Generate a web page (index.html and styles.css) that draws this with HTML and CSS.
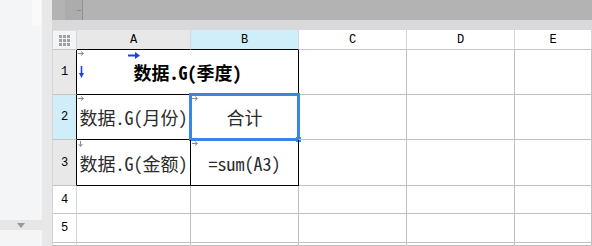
FILE: index.html
```html
<!DOCTYPE html>
<html lang="zh-CN">
<head>
    <meta charset="UTF-8">
    <title>报表设计</title>
    <link rel="stylesheet" href="styles.css">
</head>
<body>
    <!-- left side panel -->
    <div class="side-panel">
        <div class="side-top">
            <div class="side-thumb"></div>
        </div>
        <div class="side-bar">
            <svg width="8" height="5" viewBox="0 0 8 5"><path d="M0 0H8L4 5Z" fill="#9a9a9a"/></svg>
        </div>
        <div class="side-bottom"></div>
    </div>
    <div class="side-gutter"></div>

    <div class="sheet-area">
        <div class="toolbar">
            <div class="toolbar-tab"><span class="tick"></span></div>
        </div>
        <div class="toolbar-sub"></div>

        <!-- spreadsheet grid -->
        <div class="grid">
            <div class="hd corner">
                <svg width="11" height="11" viewBox="0 0 11 11" fill="#a0a0a0">
                    <rect x="0" y="0" width="3" height="3"/><rect x="4" y="0" width="3" height="3"/><rect x="8" y="0" width="3" height="3"/>
                    <rect x="0" y="4" width="3" height="3"/><rect x="4" y="4" width="3" height="3"/><rect x="8" y="4" width="3" height="3"/>
                    <rect x="0" y="8" width="3" height="3"/><rect x="4" y="8" width="3" height="3"/><rect x="8" y="8" width="3" height="3"/>
                </svg>
            </div>
            <div class="hd col used bb-dark">A</div>
            <div class="hd col active bb-dark">B</div>
            <div class="hd col">C</div>
            <div class="hd col">D</div>
            <div class="hd col">E</div>

            <!-- row 1 -->
            <div class="hd row used br-dark">1</div>
            <div class="cell merged title br-dark bb-dark">
                <svg class="mark mark-tl" width="6" height="5" viewBox="0 0 6 5"><path d="M0 2.5H5M3 0.5L5.5 2.5L3 4.5" stroke="#8a8a8a" fill="none"/></svg>
                <svg class="mark mark-right" width="12" height="7" viewBox="0 0 12 7"><path d="M0 3.5H8" stroke="#1f3fe0" stroke-width="2"/><path d="M7 0L12 3.5L7 7Z" fill="#1f3fe0"/></svg>
                <svg class="mark mark-down" width="5" height="12" viewBox="0 0 5 12"><path d="M2.5 0V8" stroke="#1f3fe0" stroke-width="1.6"/><path d="M0 7L2.5 12L5 7Z" fill="#1f3fe0"/></svg>
                数据.G(季度)
            </div>
            <div class="cell"></div>
            <div class="cell"></div>
            <div class="cell"></div>

            <!-- row 2 -->
            <div class="hd row active br-dark">2</div>
            <div class="cell br-dark bb-dark">
                <svg class="mark mark-tl" width="6" height="5" viewBox="0 0 6 5"><path d="M0 2.5H5M3 0.5L5.5 2.5L3 4.5" stroke="#8a8a8a" fill="none"/></svg>
                数据.G(月份)
            </div>
            <div class="cell br-dark bb-dark selected">
                <svg class="mark mark-tl" width="6" height="5" viewBox="0 0 6 5"><path d="M0 2.5H5M3 0.5L5.5 2.5L3 4.5" stroke="#8a8a8a" fill="none"/></svg>
                合计
                <span class="selection"><span class="handle"></span></span>
            </div>
            <div class="cell"></div>
            <div class="cell"></div>
            <div class="cell"></div>

            <!-- row 3 -->
            <div class="hd row used br-dark">3</div>
            <div class="cell br-dark bb-dark">
                <svg class="mark mark-tl" width="5" height="6" viewBox="0 0 5 6"><path d="M2.5 0V5M0.5 3L2.5 5.5L4.5 3" stroke="#8a8a8a" fill="none"/></svg>
                数据.G(金额)
            </div>
            <div class="cell br-dark bb-dark">
                <svg class="mark mark-tl" width="6" height="5" viewBox="0 0 6 5"><path d="M0 2.5H5M3 0.5L5.5 2.5L3 4.5" stroke="#8a8a8a" fill="none"/></svg>
                =sum(A3)
            </div>
            <div class="cell"></div>
            <div class="cell"></div>
            <div class="cell"></div>

            <!-- row 4 -->
            <div class="hd row">4</div>
            <div class="cell"></div>
            <div class="cell"></div>
            <div class="cell"></div>
            <div class="cell"></div>
            <div class="cell"></div>

            <!-- row 5 -->
            <div class="hd row">5</div>
            <div class="cell"></div>
            <div class="cell"></div>
            <div class="cell"></div>
            <div class="cell"></div>
            <div class="cell"></div>

            <!-- row 6 (cut off) -->
            <div class="hd row"></div>
            <div class="cell"></div>
            <div class="cell"></div>
            <div class="cell"></div>
            <div class="cell"></div>
            <div class="cell"></div>
        </div>
    </div>
</body>
</html>
```

FILE: styles.css
```css
* {
    margin: 0;
    padding: 0;
    box-sizing: border-box;
}

html, body {
    width: 592px;
    height: 246px;
    overflow: hidden;
}

body {
    display: flex;
    background-color: #fff;
    font-family: "Liberation Mono", "Noto Sans CJK SC", monospace;
}

/* Left panel */
.side-panel {
    width: 42px;
    height: 246px;
    flex-shrink: 0;
    display: flex;
    flex-direction: column;
    background-color: #f4f5f7;
}

.side-top {
    height: 220px;
    flex-shrink: 0;
    display: flex;
    justify-content: flex-end;
    padding-right: 1px;
}

.side-thumb {
    width: 9px;
    height: 26px;
    background-color: #fafafb;
    border-radius: 0 0 4px 4px;
}

.side-bar {
    height: 10px;
    flex-shrink: 0;
    background-color: #e6e6e6;
    display: flex;
    align-items: center;
    justify-content: center;
}

.side-bottom {
    flex: 1;
}

.side-gutter {
    width: 10px;
    height: 246px;
    flex-shrink: 0;
    background-color: #e8e8e8;
}

/* Sheet */
.sheet-area {
    flex: 1;
    display: flex;
    flex-direction: column;
}

.toolbar {
    height: 20px;
    flex-shrink: 0;
    background-color: #b3b3b3;
    padding-left: 13px;
    display: flex;
}

.toolbar-tab {
    width: 18px;
    height: 20px;
    background-color: #acacac;
    border-right: 1px solid #8f8f8f;
    display: flex;
    align-items: center;
    justify-content: flex-end;
    padding-right: 1px;
}

.tick {
    width: 4px;
    height: 1px;
    background-color: #8a8a8a;
}

.toolbar-sub {
    height: 10px;
    flex-shrink: 0;
    background-color: #d9d9db;
}

.grid {
    flex-shrink: 0;
    display: grid;
    grid-template-columns: 24px 114px 108px 108px 108px 77px;
    grid-template-rows: 20px 45px 45px 46px 28px 29px 3px;
    border-left: 1px solid #d4d4d4;
}

.hd {
    display: flex;
    align-items: center;
    justify-content: center;
    font-family: "Liberation Mono", monospace;
    font-size: 12px;
    color: #000;
    background-color: #fff;
    border-right: 1px solid #d6d6d6;
    border-bottom: 1px solid #c4c4c4;
}

.corner {
    background-color: #f3f4f6;
    border-top: 1px solid #e0e0e0;
}

.hd.used {
    background-color: #e8e8e8;
}

.hd.active {
    background-color: #d0eef9;
}

.cell {
    position: relative;
    display: flex;
    align-items: center;
    justify-content: center;
    font-family: "Noto Sans CJK SC", sans-serif;
    font-feature-settings: "hwid" 1;
    font-size: 18px;
    color: #2b2b2b;
    white-space: nowrap;
    border-right: 1px solid #c0c0c0;
    border-bottom: 1px solid #c0c0c0;
}

.cell.merged {
    grid-column: span 2;
}

.cell.title {
    font-weight: 700;
    color: #000;
}

.br-dark {
    border-right-color: #000;
}

.bb-dark {
    border-bottom-color: #000;
}

/* markers drawn on cells */
.mark {
    position: absolute;
}

.mark-tl {
    top: 1px;
    left: 1px;
}

.mark-right {
    top: 2px;
    left: 51px;
}

.mark-down {
    top: 16px;
    left: 2px;
}

/* selected cell */
.selection {
    position: absolute;
    top: -2px;
    left: -2px;
    right: -2px;
    bottom: -2px;
    border: 3px solid #3b85e6;
}

.handle {
    position: absolute;
    right: -4px;
    bottom: -4px;
    width: 5px;
    height: 5px;
    background-color: #3b85e6;
}
```
